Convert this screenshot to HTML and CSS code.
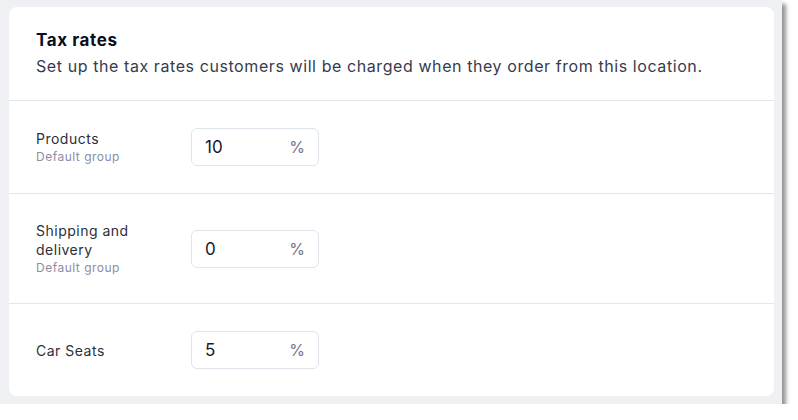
FILE: index.html
```html
<!DOCTYPE html>
<html lang="en">
<head>
<meta charset="utf-8">
<title>Tax rates</title>
<link rel="stylesheet" href="styles.css">
</head>
<body>
<div class="frame">
  <section class="card">
    <header class="card-header">
      <h2 class="title">Tax rates</h2>
      <p class="subtitle">Set up the tax rates customers will be charged when they order from this location.</p>
    </header>
    <div class="row">
      <div class="label">
        <div class="label-name">Products</div>
        <div class="label-sub">Default group</div>
      </div>
      <div class="rate-input"><span class="value">10</span><span class="suffix">%</span></div>
    </div>
    <div class="row">
      <div class="label">
        <div class="label-name">Shipping and delivery</div>
        <div class="label-sub">Default group</div>
      </div>
      <div class="rate-input"><span class="value">0</span><span class="suffix">%</span></div>
    </div>
    <div class="row">
      <div class="label">
        <div class="label-name">Car Seats</div>
      </div>
      <div class="rate-input"><span class="value">5</span><span class="suffix">%</span></div>
    </div>
  </section>
</div>
</body>
</html>
```

FILE: styles.css
```css
* { box-sizing: border-box; }
html, body { margin: 0; padding: 0; background: #ffffff; }
body { font-family: Inter, "Noto Sans", sans-serif; }

.frame {
  width: 782px;
  height: 404px;
  background: #eef0f4;
  padding: 7px 8px 8px 9px;
  box-shadow: 4px 4px 4px rgba(60, 60, 60, 0.55);
}

.card {
  background: #ffffff;
  border-radius: 8px;
  height: 389px;
  overflow: hidden;
}

.card-header {
  padding: 22px 27px 23px;
  border-bottom: 1px solid #e3e6ec;
}

.title {
  margin: 0;
  font-size: 17px;
  line-height: 22px;
  font-weight: 700;
  letter-spacing: 0.6px;
  color: #0a0e1e;
}

.subtitle {
  margin: 4px 0 0;
  font-size: 16px;
  line-height: 22px;
  letter-spacing: 0.58px;
  color: #363b4e;
}

.row {
  display: flex;
  align-items: center;
  padding: 27px 27px;
  border-bottom: 1px solid #e3e6ec;
}
.row:last-child { border-bottom: none; }

.label {
  width: 132px;
  margin-right: 23px;
}

.label-name {
  font-size: 14px;
  line-height: 19px;
  letter-spacing: 0.5px;
  color: #2b2f3d;
}

.label-sub {
  font-size: 12px;
  line-height: 17px;
  letter-spacing: 0.5px;
  color: #8a8ea3;
}

.rate-input {
  width: 128px;
  height: 38px;
  border: 1px solid #dde4ec;
  border-radius: 6px;
  display: flex;
  align-items: center;
  justify-content: space-between;
  padding: 0 13px 0 13px;
}

.value {
  font-size: 17px;
  color: #151a2c;
}

.suffix {
  font-size: 16px;
  color: #6f7488;
}
```
